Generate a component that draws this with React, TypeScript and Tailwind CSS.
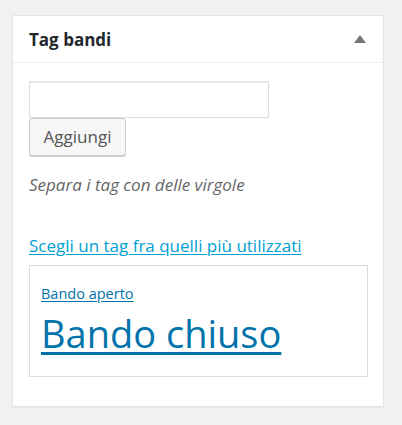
import React from 'react'

const font = { fontFamily: '"Open Sans", "Noto Sans", sans-serif' }

export default function App() {
    return (
        <div className="min-h-[425px] bg-[#f1f1f1] pt-[15px] pl-[12px]" style={font}>
            <div className="w-[372px] border border-[#e5e5e5] bg-white shadow-[0_1px_1px_rgba(0,0,0,0.04)]">
                {/* Header */}
                <div className="h-[47px] border-b border-[#eeeeee] flex items-center justify-between pl-[16px] pr-[17px]">
                    <h2 className="text-[17px] font-bold text-[#23282d] leading-none">Tag bandi</h2>
                    <svg width="12" height="8" viewBox="0 0 12 8">
                        <polygon points="6,0 12,8 0,8" fill="#72777c" />
                    </svg>
                </div>

                {/* Body */}
                <div className="pt-[18px] pl-[16px] pr-[15px] pb-[29px]">
                    <input
                        type="text"
                        className="block w-[240px] h-[37px] border border-[#dddddd] bg-white shadow-[inset_0_1px_2px_rgba(0,0,0,0.07)] px-2 outline-none"
                    />
                    <button className="block h-[38px] w-[97px] border border-[#cccccc] rounded-[3px] bg-[#f7f7f7] text-[17px] text-[#555555] shadow-[0_1px_0_#cccccc]">
                        Aggiungi
                    </button>
                    <p className="mt-[17px] text-[17px] leading-[24px] italic text-[#666666]">
                        Separa i tag con delle virgole
                    </p>
                    <a href="#" className="block w-fit mt-[37px] text-[17px] leading-[24px] text-[#00a0d2] underline underline-offset-[2px]">
                        Scegli un tag fra quelli più utilizzati
                    </a>
                    <div className="mt-[7px] w-[339px] border border-[#dddddd] pt-[18px] pb-[18px] pl-[11px]">
                        <a href="#" className="block w-fit text-[14.5px] leading-[20px] text-[#0073aa] underline underline-offset-[2px]">
                            Bando aperto
                        </a>
                        <a href="#" className="block w-fit mt-[4px] text-[38px] leading-[50px] text-[#0073aa] underline decoration-[3px] underline-offset-[4px]">
                            Bando chiuso
                        </a>
                    </div>
                </div>
            </div>
        </div>
    )
}
